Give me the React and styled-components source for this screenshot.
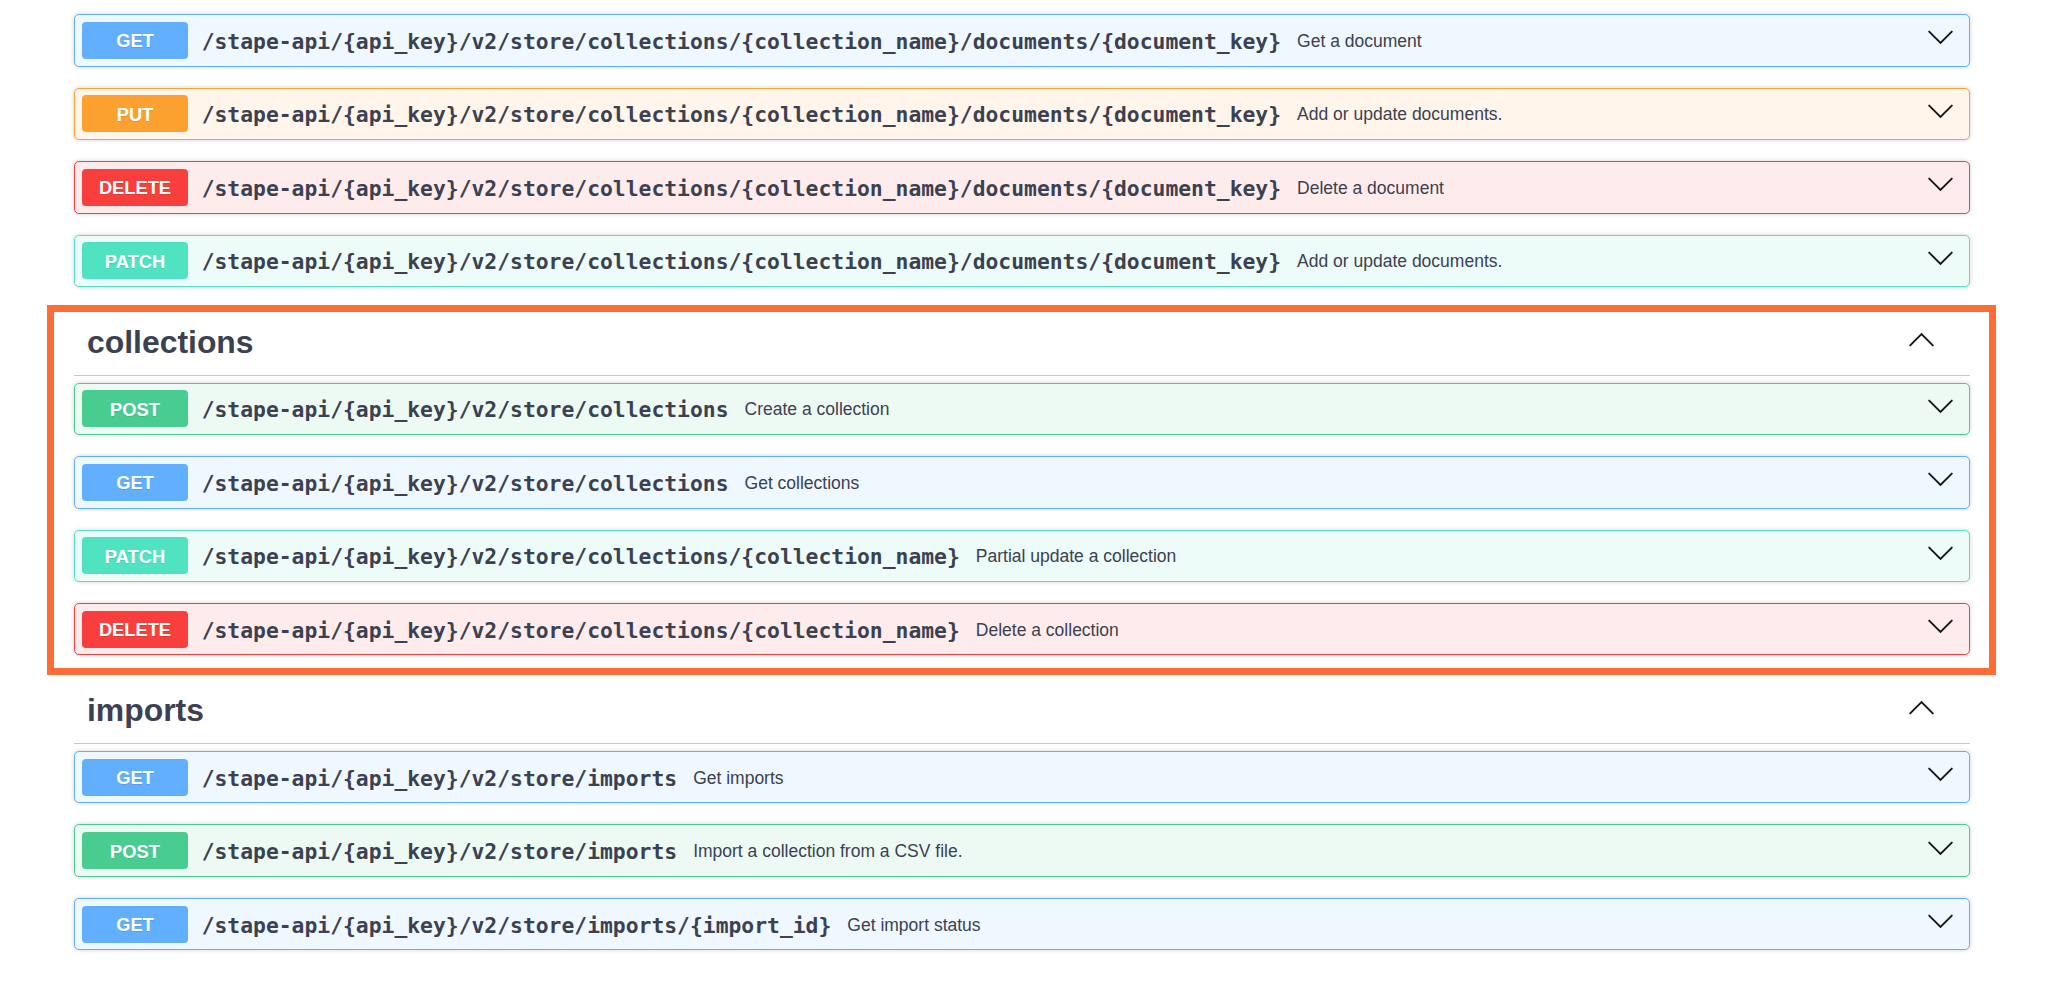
import React from "react";
import styled, { createGlobalStyle } from "styled-components";

const GlobalStyle = createGlobalStyle`
  html, body { margin: 0; padding: 0; background: #ffffff; }
  body { font-family: "Liberation Sans", Arial, sans-serif; color: #3b4151; }
  * { box-sizing: border-box; }
`;

const METHODS = {
  GET: { color: "#61affe", bg: "#eff7ff" },
  PUT: { color: "#fca130", bg: "#fff5ea" },
  DELETE: { color: "#f93e3e", bg: "#feecec" },
  PATCH: { color: "#50e3c2", bg: "#edfcf9" },
  POST: { color: "#49cc90", bg: "#edfaf4" },
};

const Page = styled.main`
  padding: 14.3px 78px 0 74px;
  width: 2048px;
`;

const Section = styled.section`
  position: relative;
  display: flex;
  flex-direction: column;
  padding-bottom: 17.5px;
`;

const Highlight = styled(Section)`
  &::after {
    content: "";
    position: absolute;
    top: 0;
    bottom: -2.3px;
    left: -27.3px;
    right: -26px;
    border: 7.3px solid #ff6c36;
    pointer-events: none;
  }
`;

const TagHeader = styled.div`
  display: flex;
  align-items: center;
  justify-content: space-between;
  height: 71px;
  padding: 0 36px 0 13px;
  margin-bottom: 7px;
  border-bottom: 1px solid rgba(59, 65, 81, 0.3);
`;

const TagTitle = styled.h3`
  margin: 0;
  padding-top: 5px;
  font-family: "Liberation Sans", Arial, sans-serif;
  font-size: 31.9px;
  line-height: 36px;
  font-weight: 700;
  color: #3b4151;
`;

const Rows = styled.div`
  display: flex;
  flex-direction: column;
  gap: 21.1px;
`;

const Op = styled.div`
  display: flex;
  align-items: center;
  height: 52.4px;
  padding: 0 16px 0 6.7px;
  border: 1px solid ${(p) => METHODS[p.$method].color};
  background: ${(p) => METHODS[p.$method].bg};
  border-radius: 5px;
  box-shadow: 0 0 4px rgba(0, 0, 0, 0.19);
`;

const Badge = styled.span`
  display: flex;
  align-items: center;
  justify-content: center;
  flex: 0 0 auto;
  width: 106.6px;
  height: 37px;
  padding-top: 2px;
  border-radius: 4px;
  background: ${(p) => METHODS[p.$method].color};
  color: #ffffff;
  font-family: "Liberation Sans", Arial, sans-serif;
  font-size: 18.3px;
  font-weight: 700;
  text-shadow: 0 1px 0 rgba(0, 0, 0, 0.1);
`;

const Path = styled.span`
  padding: 2px 13px 0 13.4px;
  font-family: "DejaVu Sans Mono", "Liberation Mono", monospace;
  font-size: 21.35px;
  font-weight: 700;
  color: #3b4151;
  white-space: nowrap;
`;

const Desc = styled.span`
  flex: 1 1 auto;
  padding: 2px 0 0 3px;
  font-family: "Liberation Sans", Arial, sans-serif;
  font-size: 17.5px;
  color: #3b4151;
  white-space: nowrap;
`;

const ArrowWrap = styled.span`
  display: flex;
  flex: 0 0 auto;
  margin-bottom: ${(p) => (p.$up ? "0" : "5px")};
`;

const Chevron = ({ up }) => (
  <ArrowWrap $up={up}>
    <svg width="25" height="15" viewBox="0 0 25 15" aria-hidden="true">
      <polyline
        points={up ? "1.2,13.4 12.5,2 23.8,13.4" : "1.2,1.6 12.5,13 23.8,1.6"}
        fill="none"
        stroke="#161616"
        strokeWidth="1.9"
        strokeLinecap="round"
        strokeLinejoin="miter"
      />
    </svg>
  </ArrowWrap>
);

const Operation = ({ method, path, summary }) => (
  <Op $method={method}>
    <Badge $method={method}>{method}</Badge>
    <Path>{path}</Path>
    <Desc>{summary}</Desc>
    <Chevron />
  </Op>
);

const base = "/stape-api/{api_key}/v2/store";
const docPath = `${base}/collections/{collection_name}/documents/{document_key}`;

const documents = [
  { method: "GET", path: docPath, summary: "Get a document" },
  { method: "PUT", path: docPath, summary: "Add or update documents." },
  { method: "DELETE", path: docPath, summary: "Delete a document" },
  { method: "PATCH", path: docPath, summary: "Add or update documents." },
];

const collections = [
  { method: "POST", path: `${base}/collections`, summary: "Create a collection" },
  { method: "GET", path: `${base}/collections`, summary: "Get collections" },
  { method: "PATCH", path: `${base}/collections/{collection_name}`, summary: "Partial update a collection" },
  { method: "DELETE", path: `${base}/collections/{collection_name}`, summary: "Delete a collection" },
];

const imports = [
  { method: "GET", path: `${base}/imports`, summary: "Get imports" },
  { method: "POST", path: `${base}/imports`, summary: "Import a collection from a CSV file." },
  { method: "GET", path: `${base}/imports/{import_id}`, summary: "Get import status" },
];

const OpList = ({ items }) => (
  <Rows>
    {items.map((op, i) => (
      <Operation key={i} {...op} />
    ))}
  </Rows>
);

const Header = ({ title }) => (
  <TagHeader>
    <TagTitle>{title}</TagTitle>
    <Chevron up />
  </TagHeader>
);

export default function App() {
  return (
    <>
      <GlobalStyle />
      <Page>
        <Section>
          <OpList items={documents} />
        </Section>
        <Highlight>
          <Header title="collections" />
          <OpList items={collections} />
        </Highlight>
        <Section>
          <Header title="imports" />
          <OpList items={imports} />
        </Section>
      </Page>
    </>
  );
}
